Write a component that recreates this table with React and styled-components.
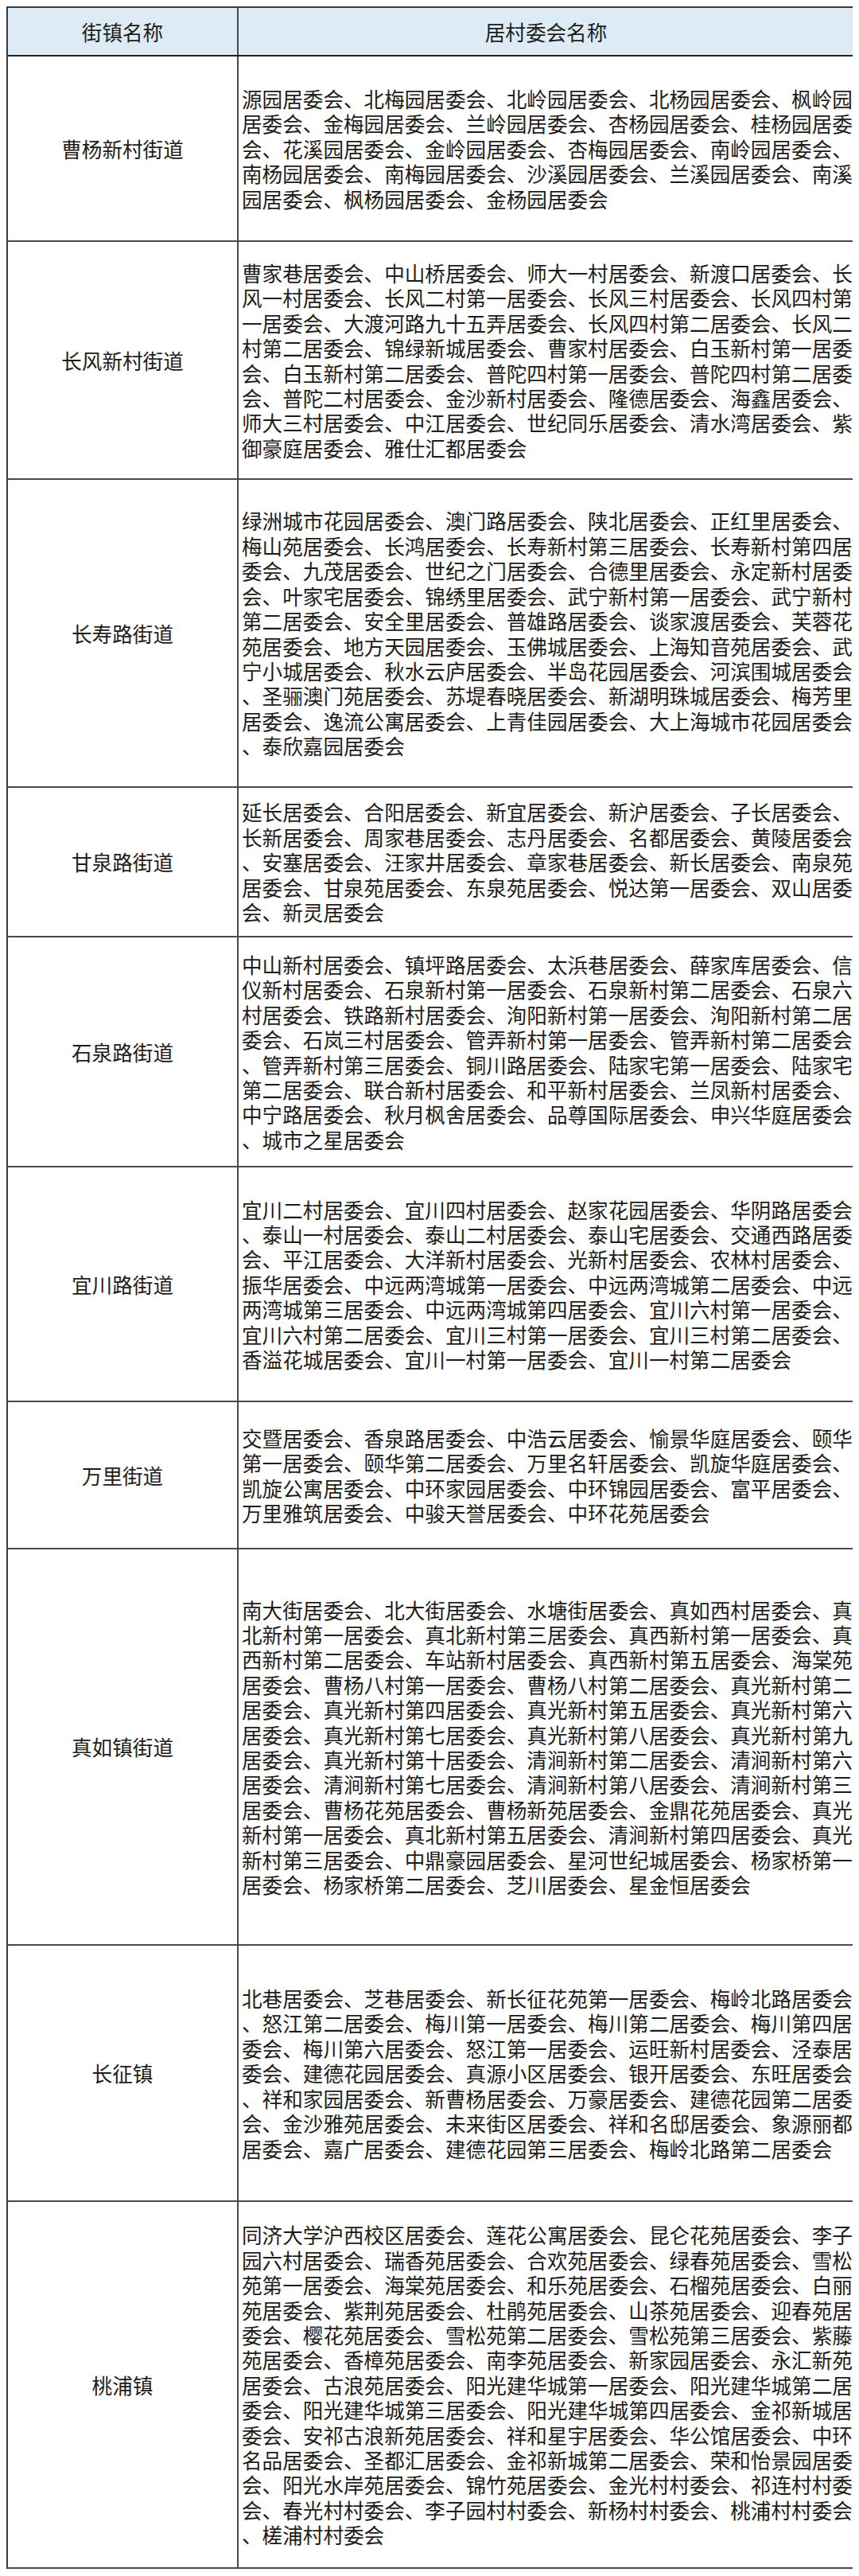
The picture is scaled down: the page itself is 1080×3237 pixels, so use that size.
import React from 'react';
import styled, { createGlobalStyle } from 'styled-components';

const GlobalStyle = createGlobalStyle`
  body {
    margin: 8px;
    background: #fff;
    font-family: 'Noto Sans CJK SC', 'Noto Sans', sans-serif;
    color: #1c1c1c;
  }
`;

const Sheet = styled.div`
  width: 1067px;
  box-sizing: border-box;
  border: 2px solid #3a3a3a;
  border-bottom: none;
`;

const Row = styled.div`
  display: grid;
  grid-template-columns: 290px 1fr;
  height: ${p => p.$h}px;
  box-sizing: border-box;
  border-bottom: 2px solid ${p => (p.$head ? '#222' : '#4a4a4a')};
  background: ${p => (p.$head ? '#ddebf7' : '#fff')};
`;

const NameCell = styled.div`
  display: flex;
  align-items: center;
  justify-content: center;
  box-sizing: border-box;
  border-right: 2px solid #4a4a4a;
  font-size: 25.6px;
  line-height: 31.4px;
`;

const ListCell = styled.div`
  display: flex;
  align-items: center;
  justify-content: ${p => (p.$head ? 'center' : 'flex-start')};
  padding-left: ${p => (p.$head ? 0 : 4)}px;
  font-size: 25.6px;
`;

const ListText = styled.p`
  margin: 0;
  width: 770px;
  line-height: 31.4px;
  line-break: anywhere;
  word-break: break-all;
`;

const rows = [
  {
    name: '曹杨新村街道',
    h: 233,
    list: '源园居委会、北梅园居委会、北岭园居委会、北杨园居委会、枫岭园居委会、金梅园居委会、兰岭园居委会、杏杨园居委会、桂杨园居委会、花溪园居委会、金岭园居委会、杏梅园居委会、南岭园居委会、南杨园居委会、南梅园居委会、沙溪园居委会、兰溪园居委会、南溪园居委会、枫杨园居委会、金杨园居委会',
  },
  {
    name: '长风新村街道',
    h: 299,
    list: '曹家巷居委会、中山桥居委会、师大一村居委会、新渡口居委会、长风一村居委会、长风二村第一居委会、长风三村居委会、长风四村第一居委会、大渡河路九十五弄居委会、长风四村第二居委会、长风二村第二居委会、锦绿新城居委会、曹家村居委会、白玉新村第一居委会、白玉新村第二居委会、普陀四村第一居委会、普陀四村第二居委会、普陀二村居委会、金沙新村居委会、隆德居委会、海鑫居委会、师大三村居委会、中江居委会、世纪同乐居委会、清水湾居委会、紫御豪庭居委会、雅仕汇都居委会',
  },
  {
    name: '长寿路街道',
    h: 387,
    list: '绿洲城市花园居委会、澳门路居委会、陕北居委会、正红里居委会、梅山苑居委会、长鸿居委会、长寿新村第三居委会、长寿新村第四居委会、九茂居委会、世纪之门居委会、合德里居委会、永定新村居委会、叶家宅居委会、锦绣里居委会、武宁新村第一居委会、武宁新村第二居委会、安全里居委会、普雄路居委会、谈家渡居委会、芙蓉花苑居委会、地方天园居委会、玉佛城居委会、上海知音苑居委会、武宁小城居委会、秋水云庐居委会、半岛花园居委会、河滨围城居委会、圣骊澳门苑居委会、苏堤春晓居委会、新湖明珠城居委会、梅芳里居委会、逸流公寓居委会、上青佳园居委会、大上海城市花园居委会、泰欣嘉园居委会',
  },
  {
    name: '甘泉路街道',
    h: 188,
    list: '延长居委会、合阳居委会、新宜居委会、新沪居委会、子长居委会、长新居委会、周家巷居委会、志丹居委会、名都居委会、黄陵居委会、安塞居委会、汪家井居委会、章家巷居委会、新长居委会、南泉苑居委会、甘泉苑居委会、东泉苑居委会、悦达第一居委会、双山居委会、新灵居委会',
  },
  {
    name: '石泉路街道',
    h: 289,
    list: '中山新村居委会、镇坪路居委会、太浜巷居委会、薛家库居委会、信仪新村居委会、石泉新村第一居委会、石泉新村第二居委会、石泉六村居委会、铁路新村居委会、洵阳新村第一居委会、洵阳新村第二居委会、石岚三村居委会、管弄新村第一居委会、管弄新村第二居委会、管弄新村第三居委会、铜川路居委会、陆家宅第一居委会、陆家宅第二居委会、联合新村居委会、和平新村居委会、兰凤新村居委会、中宁路居委会、秋月枫舍居委会、品尊国际居委会、申兴华庭居委会、城市之星居委会',
  },
  {
    name: '宜川路街道',
    h: 295,
    list: '宜川二村居委会、宜川四村居委会、赵家花园居委会、华阴路居委会、泰山一村居委会、泰山二村居委会、泰山宅居委会、交通西路居委会、平江居委会、大洋新村居委会、光新村居委会、农林村居委会、振华居委会、中远两湾城第一居委会、中远两湾城第二居委会、中远两湾城第三居委会、中远两湾城第四居委会、宜川六村第一居委会、宜川六村第二居委会、宜川三村第一居委会、宜川三村第二居委会、香溢花城居委会、宜川一村第一居委会、宜川一村第二居委会',
  },
  {
    name: '万里街道',
    h: 185,
    list: '交暨居委会、香泉路居委会、中浩云居委会、愉景华庭居委会、颐华第一居委会、颐华第二居委会、万里名轩居委会、凯旋华庭居委会、凯旋公寓居委会、中环家园居委会、中环锦园居委会、富平居委会、万里雅筑居委会、中骏天誉居委会、中环花苑居委会',
  },
  {
    name: '真如镇街道',
    h: 498,
    list: '南大街居委会、北大街居委会、水塘街居委会、真如西村居委会、真北新村第一居委会、真北新村第三居委会、真西新村第一居委会、真西新村第二居委会、车站新村居委会、真西新村第五居委会、海棠苑居委会、曹杨八村第一居委会、曹杨八村第二居委会、真光新村第二居委会、真光新村第四居委会、真光新村第五居委会、真光新村第六居委会、真光新村第七居委会、真光新村第八居委会、真光新村第九居委会、真光新村第十居委会、清涧新村第二居委会、清涧新村第六居委会、清涧新村第七居委会、清涧新村第八居委会、清涧新村第三居委会、曹杨花苑居委会、曹杨新苑居委会、金鼎花苑居委会、真光新村第一居委会、真北新村第五居委会、清涧新村第四居委会、真光新村第三居委会、中鼎豪园居委会、星河世纪城居委会、杨家桥第一居委会、杨家桥第二居委会、芝川居委会、星金恒居委会',
  },
  {
    name: '长征镇',
    h: 322,
    list: '北巷居委会、芝巷居委会、新长征花苑第一居委会、梅岭北路居委会、怒江第二居委会、梅川第一居委会、梅川第二居委会、梅川第四居委会、梅川第六居委会、怒江第一居委会、运旺新村居委会、泾泰居委会、建德花园居委会、真源小区居委会、银开居委会、东旺居委会、祥和家园居委会、新曹杨居委会、万豪居委会、建德花园第二居委会、金沙雅苑居委会、未来街区居委会、祥和名邸居委会、象源丽都居委会、嘉广居委会、建德花园第三居委会、梅岭北路第二居委会',
  },
  {
    name: '桃浦镇',
    h: 461,
    list: '同济大学沪西校区居委会、莲花公寓居委会、昆仑花苑居委会、李子园六村居委会、瑞香苑居委会、合欢苑居委会、绿春苑居委会、雪松苑第一居委会、海棠苑居委会、和乐苑居委会、石榴苑居委会、白丽苑居委会、紫荆苑居委会、杜鹃苑居委会、山茶苑居委会、迎春苑居委会、樱花苑居委会、雪松苑第二居委会、雪松苑第三居委会、紫藤苑居委会、香樟苑居委会、南李苑居委会、新家园居委会、永汇新苑居委会、古浪苑居委会、阳光建华城第一居委会、阳光建华城第二居委会、阳光建华城第三居委会、阳光建华城第四居委会、金祁新城居委会、安祁古浪新苑居委会、祥和星宇居委会、华公馆居委会、中环名品居委会、圣都汇居委会、金祁新城第二居委会、荣和怡景园居委会、阳光水岸苑居委会、锦竹苑居委会、金光村村委会、祁连村村委会、春光村村委会、李子园村村委会、新杨村村委会、桃浦村村委会、槎浦村村委会',
  },
];

export default function App() {
  return (
    <>
      <GlobalStyle />
      <Sheet>
        <Row $head $h={61}>
          <NameCell>街镇名称</NameCell>
          <ListCell $head>居村委会名称</ListCell>
        </Row>
        {rows.map(r => (
          <Row key={r.name} $h={r.h}>
            <NameCell>{r.name}</NameCell>
            <ListCell>
              <ListText>{r.list}</ListText>
            </ListCell>
          </Row>
        ))}
      </Sheet>
    </>
  );
}
